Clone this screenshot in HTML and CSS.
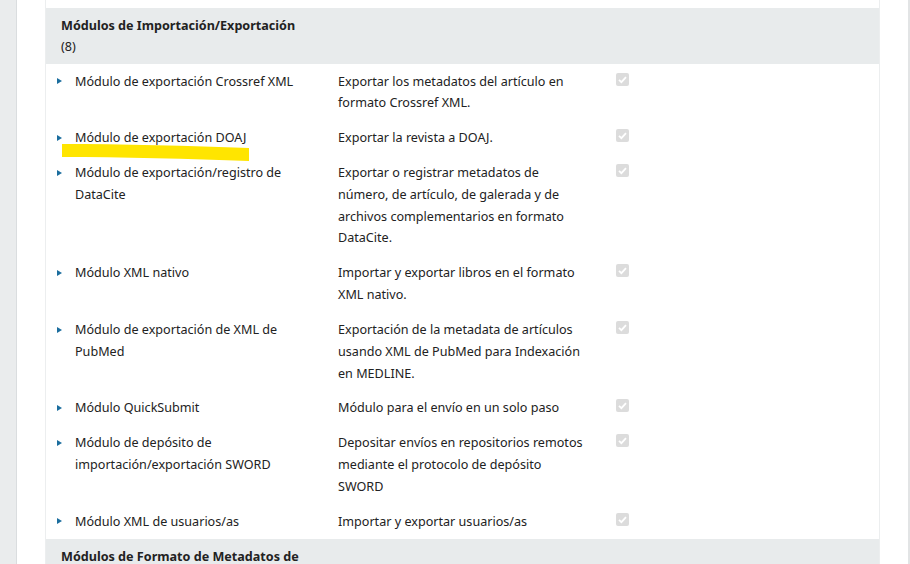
FILE: index.html
```html
<!DOCTYPE html>
<html lang="es">
<head>
<meta charset="utf-8">
<title>Módulos</title>
<link rel="stylesheet" href="styles.css">
</head>
<body>
<div class="app">
  <aside class="sidebar"></aside>
  <main class="main">
    <div class="panel">
      <div class="spacer"></div>
      <div class="cat-header">
        <div class="cat-title">Módulos de Importación/Exportación</div>
        <div class="cat-count">(8)</div>
      </div>

      <div class="row">
        <div class="name"><span class="tri"></span><span class="label">Módulo de exportación Crossref XML</span></div>
        <div class="desc">Exportar los metadatos del artículo en formato Crossref XML.</div>
        <div class="check"><span class="box"><svg viewBox="0 0 13 13" width="13" height="13"><path d="M3 6.8 L5.4 9.2 L10 4.2" fill="none" stroke="#fff" stroke-width="1.8"/></svg></span></div>
      </div>

      <div class="row">
        <div class="name"><span class="tri"></span><span class="label">Módulo de exportación DOAJ</span></div>
        <div class="desc">Exportar la revista a DOAJ.</div>
        <div class="check"><span class="box"><svg viewBox="0 0 13 13" width="13" height="13"><path d="M3 6.8 L5.4 9.2 L10 4.2" fill="none" stroke="#fff" stroke-width="1.8"/></svg></span></div>
        <svg class="highlight" viewBox="0 0 190 20" width="190" height="20"><path d="M1 2 C60 2 130 4 188 6 L188 19 C130 17 60 15 1 15 Z" fill="#ffe500"/></svg>
      </div>

      <div class="row">
        <div class="name"><span class="tri"></span><span class="label">Módulo de exportación/registro de DataCite</span></div>
        <div class="desc">Exportar o registrar metadatos de número, de artículo, de galerada y de archivos complementarios en formato DataCite.</div>
        <div class="check"><span class="box"><svg viewBox="0 0 13 13" width="13" height="13"><path d="M3 6.8 L5.4 9.2 L10 4.2" fill="none" stroke="#fff" stroke-width="1.8"/></svg></span></div>
      </div>

      <div class="row">
        <div class="name"><span class="tri"></span><span class="label">Módulo XML nativo</span></div>
        <div class="desc">Importar y exportar libros en el formato XML nativo.</div>
        <div class="check"><span class="box"><svg viewBox="0 0 13 13" width="13" height="13"><path d="M3 6.8 L5.4 9.2 L10 4.2" fill="none" stroke="#fff" stroke-width="1.8"/></svg></span></div>
      </div>

      <div class="row">
        <div class="name"><span class="tri"></span><span class="label">Módulo de exportación de XML de PubMed</span></div>
        <div class="desc">Exportación de la metadata de artículos usando XML de PubMed para Indexación en MEDLINE.</div>
        <div class="check"><span class="box"><svg viewBox="0 0 13 13" width="13" height="13"><path d="M3 6.8 L5.4 9.2 L10 4.2" fill="none" stroke="#fff" stroke-width="1.8"/></svg></span></div>
      </div>

      <div class="row">
        <div class="name"><span class="tri"></span><span class="label">Módulo QuickSubmit</span></div>
        <div class="desc">Módulo para el envío en un solo paso</div>
        <div class="check"><span class="box"><svg viewBox="0 0 13 13" width="13" height="13"><path d="M3 6.8 L5.4 9.2 L10 4.2" fill="none" stroke="#fff" stroke-width="1.8"/></svg></span></div>
      </div>

      <div class="row">
        <div class="name"><span class="tri"></span><span class="label">Módulo de depósito de importación/exportación SWORD</span></div>
        <div class="desc">Depositar envíos en repositorios remotos mediante el protocolo de depósito SWORD</div>
        <div class="check"><span class="box"><svg viewBox="0 0 13 13" width="13" height="13"><path d="M3 6.8 L5.4 9.2 L10 4.2" fill="none" stroke="#fff" stroke-width="1.8"/></svg></span></div>
      </div>

      <div class="row">
        <div class="name"><span class="tri"></span><span class="label">Módulo XML de usuarios/as</span></div>
        <div class="desc">Importar y exportar usuarios/as</div>
        <div class="check"><span class="box"><svg viewBox="0 0 13 13" width="13" height="13"><path d="M3 6.8 L5.4 9.2 L10 4.2" fill="none" stroke="#fff" stroke-width="1.8"/></svg></span></div>
      </div>

      <div class="cat-header">
        <div class="cat-title">Módulos de Formato de Metadatos de</div>
        <div class="cat-count">(0)</div>
      </div>
    </div>
  </main>
  <div class="edge"></div>
</div>
</body>
</html>
```

FILE: styles.css
```css
html, body {
  margin: 0;
  padding: 0;
  height: 100%;
  overflow: hidden;
}
body {
  font-family: "Noto Sans", "Open Sans", sans-serif;
  font-size: 12.6px;
  line-height: 21.7px;
  color: #222;
  background: #fff;
}
.app {
  display: flex;
  height: 564px;
}
.sidebar {
  width: 16px;
  flex: none;
  background: #eaeced;
  border-right: 1px solid #dadddf;
}
.main {
  flex: 1;
  background: #fff;
  padding: 0 28px;
  overflow: hidden;
}
.edge {
  width: 2px;
  flex: none;
  background: #e2e4e5;
}
.panel {
  border-left: 1px solid #eceeef;
  border-right: 1px solid #eceeef;
  height: 100%;
}
.spacer {
  height: 8px;
}
.cat-header {
  background: #e8ebec;
  padding: 6.5px 15px 6.1px;
}
.cat-title {
  font-weight: 700;
}
.row {
  position: relative;
  display: grid;
  grid-template-columns: 292px 278px 1fr;
  padding: 6.65px 0;
}
.name {
  display: flex;
  align-items: flex-start;
  padding-left: 11px;
  padding-right: 20px;
}
.tri {
  flex: none;
  width: 0;
  height: 0;
  margin-top: 7.5px;
  margin-right: 13px;
  border-top: 3px solid transparent;
  border-bottom: 3px solid transparent;
  border-left: 5px solid #1b6d9e;
}
.desc {
  padding-right: 30px;
}
.check {
  padding-top: 2px;
}
.box {
  display: block;
  width: 13px;
  height: 13px;
  background: #dcdcdc;
  border-radius: 2px;
}
.box svg {
  display: block;
}
.highlight {
  position: absolute;
  left: 15px;
  top: 21px;
}
```
